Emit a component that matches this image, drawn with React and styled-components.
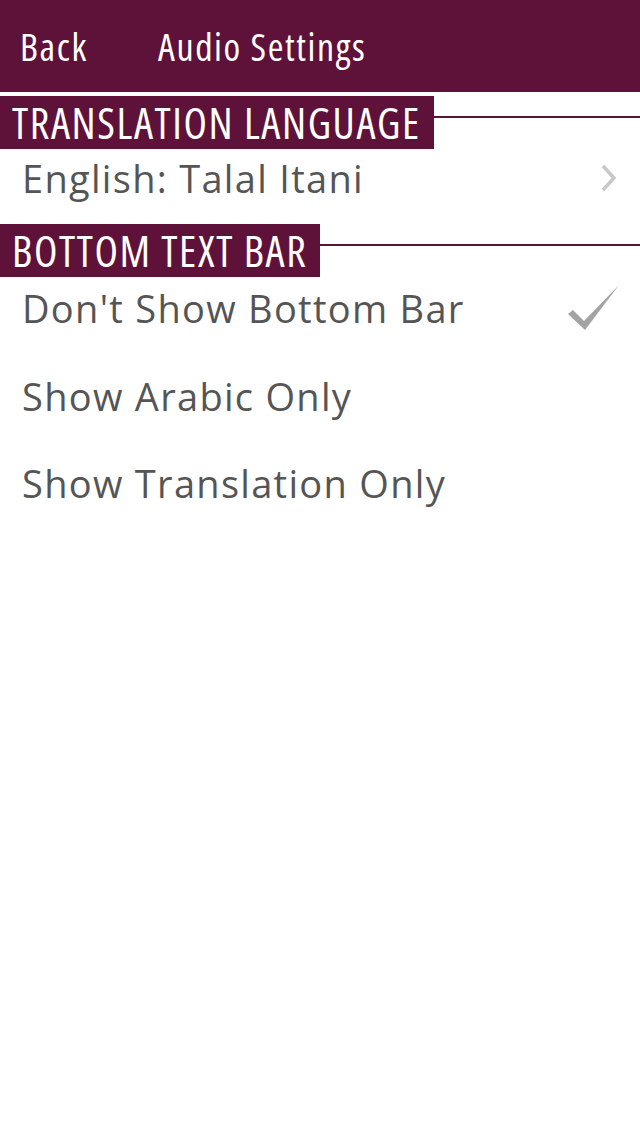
import styled, { createGlobalStyle } from "styled-components";

const maroon = "#5e1239";

const GlobalStyle = createGlobalStyle`
   *, *::before, *::after {
      box-sizing: border-box;
   }
   html, body {
      margin: 0;
      padding: 0;
      background: #fff;
   }
   body {
      font-family: "Open Sans", "Noto Sans", sans-serif;
   }
`;

const Screen = styled.div`
   width: 640px;
   min-height: 1136px;
   background: #fff;
   display: flex;
   flex-direction: column;
`;

const NavBar = styled.header`
   height: 92px;
   background: ${maroon};
   display: flex;
   align-items: center;
   padding: 0 0 0 20px;
   color: #fff;
   font-size: 38px;
   font-stretch: condensed;
   letter-spacing: 1.6px;
   line-height: 1;
`;

const BackButton = styled.span`
   width: 138px;
`;

const Title = styled.span``;

const SectionHeader = styled.div`
   display: flex;
   height: 53px;
   margin-top: ${(p) => p.$top}px;
`;

const SectionLabel = styled.div`
   background: ${maroon};
   color: #fff;
   font-size: 43px;
   font-stretch: condensed;
   letter-spacing: 1.6px;
   line-height: 1;
   padding: 0 13px 0 12px;
   display: flex;
   align-items: center;
   white-space: nowrap;
`;

const SectionRule = styled.div`
   flex: 1;
   height: 2px;
   margin-top: 20px;
   background: ${maroon};
`;

const Row = styled.div`
   height: ${(p) => p.$height}px;
   padding: 0 22px ${(p) => p.$padBottom || 0}px 22px;
   display: flex;
   align-items: center;
   justify-content: space-between;
   color: #555;
   font-size: 38px;
   letter-spacing: 1.3px;
   line-height: 1;
`;

const Chevron = () => (
   <svg width="18" height="28" viewBox="0 0 18 28">
      <path d="M3 2 L14 14 L3 26" fill="none" stroke="#c7c7cc" strokeWidth="3.5" />
   </svg>
);

const Check = () => (
   <svg width="56" height="50" viewBox="0 0 56 50" style={{ marginRight: -4 }}>
      <polygon points="2,31 7,27 18,38 53,2 19,47" fill="#a3a3a3" />
   </svg>
);

const App = () => {
   return (
      <Screen>
         <GlobalStyle />
         <NavBar>
            <BackButton>Back</BackButton>
            <Title>Audio Settings</Title>
         </NavBar>
         <SectionHeader $top={4}>
            <SectionLabel>TRANSLATION LANGUAGE</SectionLabel>
            <SectionRule />
         </SectionHeader>
         <Row $height={58}>
            <span>English: Talal Itani</span>
            <Chevron />
         </Row>
         <SectionHeader $top={17}>
            <SectionLabel>BOTTOM TEXT BAR</SectionLabel>
            <SectionRule />
         </SectionHeader>
         <Row $height={75} $padBottom={13}>
            <span>Don't Show Bottom Bar</span>
            <Check />
         </Row>
         <Row $height={87}>
            <span>Show Arabic Only</span>
         </Row>
         <Row $height={87}>
            <span>Show Translation Only</span>
         </Row>
      </Screen>
   );
};

export default App;
